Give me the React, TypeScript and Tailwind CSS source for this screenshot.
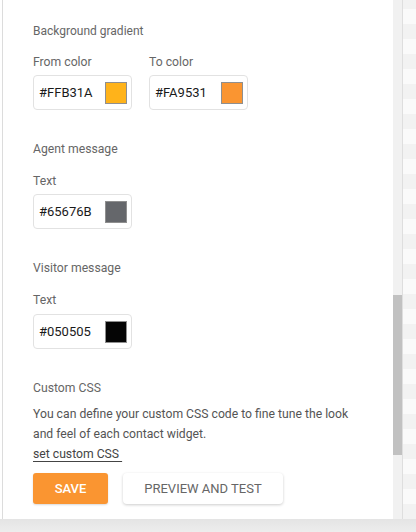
import React from "react";

function ColorInput({ value, color }: { value: string; color: string }) {
  return (
    <div className="flex h-[35px] w-[99px] items-center justify-between rounded-[4px] border border-[#e2e2e2] bg-white pl-[5px] pr-[4px]">
      <span className="text-[13px] leading-[20px] text-[#1a1a1a]">{value}</span>
      <span className="h-[22px] w-[22px] border border-[#8f8f8f]" style={{ backgroundColor: color }} />
    </div>
  );
}

export default function App() {
  return (
    <div
      className="flex h-[532px] w-[416px] flex-col overflow-hidden bg-white"
      style={{ fontFamily: "Roboto, 'Liberation Sans', sans-serif" }}
    >
      <div className="flex h-[519px] flex-row">
        <div className="w-[2px] bg-white" />
        <div className="flex w-[391px] flex-col border-l border-[#dcdcdc] pl-[30px]">
          <div className="mt-[21px] text-[12px] leading-[20px] text-[#666]">Background gradient</div>
          <div className="mt-[11px] flex flex-row gap-[17px]">
            <div className="flex flex-col">
              <div className="text-[12.2px] leading-[20px] text-[#666]">From color</div>
              <div className="mt-[3px]">
                <ColorInput value="#FFB31A" color="#FFB31A" />
              </div>
            </div>
            <div className="flex flex-col">
              <div className="text-[12.2px] leading-[20px] text-[#666]">To color</div>
              <div className="mt-[3px]">
                <ColorInput value="#FA9531" color="#FA9531" />
              </div>
            </div>
          </div>

          <div className="mt-[29px] text-[12.2px] leading-[20px] text-[#666]">Agent message</div>
          <div className="mt-[12px] text-[12.2px] leading-[20px] text-[#666]">Text</div>
          <div className="mt-[3px]">
            <ColorInput value="#65676B" color="#65676B" />
          </div>

          <div className="mt-[29px] text-[12.2px] leading-[20px] text-[#666]">Visitor message</div>
          <div className="mt-[12px] text-[12.2px] leading-[20px] text-[#666]">Text</div>
          <div className="mt-[4px]">
            <ColorInput value="#050505" color="#050505" />
          </div>

          <div className="mt-[29px] text-[12.2px] leading-[20px] text-[#666]">Custom CSS</div>
          <div className="mt-[6px] w-[322px] text-[12.2px] leading-[20px] text-[#555]">
            You can define your custom CSS code to fine tune the look and feel of each contact widget.
          </div>
          <div className="text-[12.2px] leading-[20px] text-[#444]">
            <span className="underline underline-offset-[3px]">set custom CSS&nbsp;</span>
          </div>

          <div className="mt-[9px] flex flex-row gap-[15px]">
            <button className="h-[31px] w-[75px] rounded-[3px] bg-[#FA9531] text-[13px] font-medium text-white shadow-[0_1px_2px_rgba(0,0,0,0.15)]">
              SAVE
            </button>
            <button className="h-[31px] w-[160px] rounded-[4px] bg-white text-[13px] text-[#666] shadow-[0_1px_3px_rgba(0,0,0,0.2)]">
              PREVIEW AND TEST
            </button>
          </div>
        </div>
        <div className="flex w-[9px] flex-col bg-[#f1f1f1]">
          <div className="h-[295px]" />
          <div className="h-[160px] bg-[#c1c1c1]" />
        </div>
        <div className="w-[1px] bg-[#dedede]" />
        <div className="flex-1 bg-[repeating-linear-gradient(180deg,#f2f2f2_0px,#f2f2f2_15px,#fafafa_15px,#fafafa_30px)] bg-[position:0_-6px]" />
      </div>
      <div className="h-[13px] bg-[linear-gradient(180deg,#e4e4e4,#ededed)]" />
    </div>
  );
}
